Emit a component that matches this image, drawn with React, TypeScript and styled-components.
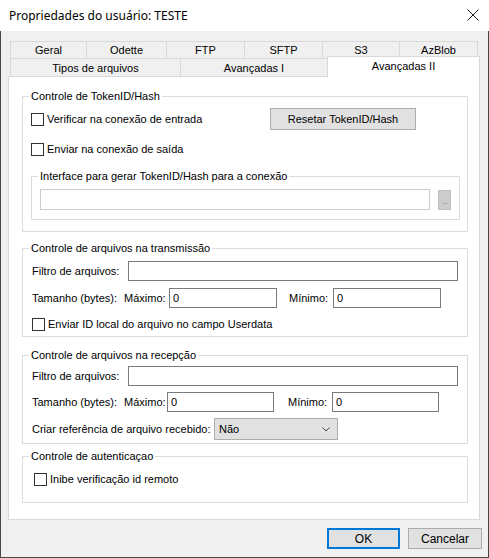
import React from "react";
import styled, { createGlobalStyle } from "styled-components";

const GlobalStyle = createGlobalStyle`
  html, body {
    margin: 0;
    padding: 0;
    background: #ffffff;
  }
  body {
    font-family: "Liberation Sans", Arial, sans-serif;
    font-size: 11px;
    color: #000000;
  }
  * {
    box-sizing: border-box;
  }
`;

const firstRowTabs = [
  { label: "Geral", width: 76 },
  { label: "Odette", width: 80 },
  { label: "FTP", width: 78 },
  { label: "SFTP", width: 78 },
  { label: "S3", width: 77 },
  { label: "AzBlob", width: 79 },
];

const secondRowTabs = [
  { label: "Tipos de arquivos", width: 170 },
  { label: "Avançadas I", width: 147 },
  { label: "Avançadas II", width: 153, active: true },
];

type CheckProps = {
  label: string;
  width?: number;
};

const CheckField = (props: CheckProps) => {
  const { label, width } = props;
  return (
    <CheckWrap $width={width}>
      <CheckBox />
      <span>{label}</span>
    </CheckWrap>
  );
};

type RangeProps = {
  labelWidth: number;
  maxLabelWidth: number;
  minLabelWidth: number;
  fieldWidth: number;
  gap: number;
};

const SizeRange = (props: RangeProps) => {
  const { labelWidth, maxLabelWidth, minLabelWidth, fieldWidth, gap } = props;
  return (
    <Row>
      <Label $width={labelWidth}>Tamanho (bytes):</Label>
      <Label $width={maxLabelWidth}>Máximo:</Label>
      <TextBox $width={fieldWidth} defaultValue="0" />
      <Label $width={minLabelWidth} $left={gap}>
        Mínimo:
      </Label>
      <TextBox $width={fieldWidth} defaultValue="0" />
    </Row>
  );
};

export default function App() {
  return (
    <>
      <GlobalStyle />
      <Window>
        <TitleBar>
          <span>Propriedades do usuário: TESTE</span>
          <svg width="12" height="12" viewBox="0 0 12 12">
            <path d="M0.5 0.5 L11.5 11.5 M11.5 0.5 L0.5 11.5" stroke="#1a1a1a" strokeWidth="1" />
          </svg>
        </TitleBar>

        <Body>
          <TabStrip>
            <TabRow>
              {firstRowTabs.map((t, i) => (
                <Tab key={t.label} $width={t.width} $last={i === firstRowTabs.length - 1}>
                  {t.label}
                </Tab>
              ))}
            </TabRow>
            <TabRow $second>
              {secondRowTabs.map((t) =>
                t.active ? (
                  <ActiveTab key={t.label} $width={t.width}>
                    {t.label}
                  </ActiveTab>
                ) : (
                  <Tab key={t.label} $width={t.width}>
                    {t.label}
                  </Tab>
                )
              )}
            </TabRow>
          </TabStrip>

          <Panel>
            <GroupBox>
              <Legend>Controle de TokenID/Hash</Legend>
              <GroupContent $pad="5px 8px 11px 8px">
                <Row $height={22}>
                  <CheckField label="Verificar na conexão de entrada" width={239} />
                  <PushButton $width={146}>Resetar TokenID/Hash</PushButton>
                </Row>
                <Row $height={16} $top={11}>
                  <CheckField label="Enviar na conexão de saída" />
                </Row>
                <InnerGroup>
                  <Legend>Interface para gerar TokenID/Hash para a conexão</Legend>
                  <GroupContent $pad="6px 8px 9px 8px">
                    <Row>
                      <TextBox $width={390} $height={21} $disabled />
                      <EllipsisButton>...</EllipsisButton>
                    </Row>
                  </GroupContent>
                </InnerGroup>
              </GroupContent>
            </GroupBox>

            <GroupBox $gap={10}>
              <Legend>Controle de arquivos na transmissão</Legend>
              <GroupContent $pad="6px 9px 4px 9px">
                <Row>
                  <Label $width={96}>Filtro de arquivos:</Label>
                  <TextBox $width={330} />
                </Row>
                <Row $top={7}>
                  <SizeRange labelWidth={92} maxLabelWidth={45} minLabelWidth={44} fieldWidth={108} gap={12} />
                </Row>
                <Row $height={16} $top={8}>
                  <CheckField label="Enviar ID local do arquivo no campo Userdata" />
                </Row>
              </GroupContent>
            </GroupBox>

            <GroupBox $gap={12}>
              <Legend>Controle de arquivos na recepção</Legend>
              <GroupContent $pad="4px 9px 3px 9px">
                <Row>
                  <Label $width={96}>Filtro de arquivos:</Label>
                  <TextBox $width={330} />
                </Row>
                <Row $top={6}>
                  <SizeRange labelWidth={92} maxLabelWidth={43} minLabelWidth={44} fieldWidth={107} gap={14} />
                </Row>
                <Row $top={6}>
                  <Label $width={182}>Criar referência de arquivo recebido:</Label>
                  <ComboBox>
                    <span>Não</span>
                    <svg width="8" height="5" viewBox="0 0 8 5">
                      <path d="M0.5 0.5 L4 4 L7.5 0.5" fill="none" stroke="#444" strokeWidth="1" />
                    </svg>
                  </ComboBox>
                </Row>
              </GroupContent>
            </GroupBox>

            <GroupBox $gap={6}>
              <Legend>Controle de autenticaçao</Legend>
              <GroupContent $pad="8px 11px 15px 11px">
                <Row $height={16}>
                  <CheckField label="Inibe verificação id remoto" />
                </Row>
              </GroupContent>
            </GroupBox>
          </Panel>

          <Footer>
            <DialogButton $width={73} $default>
              OK
            </DialogButton>
            <DialogButton $width={74}>Cancelar</DialogButton>
          </Footer>
        </Body>
      </Window>
    </>
  );
}

const Window = styled.div`
  width: 489px;
  height: 558px;
  display: flex;
  flex-direction: column;
  background: #f0f0f0;
`;

const TitleBar = styled.div`
  height: 31px;
  flex: none;
  background: #ffffff;
  display: flex;
  align-items: center;
  justify-content: space-between;
  padding: 0 10px 1px 9px;
  font-family: "Segoe UI", "Noto Sans", sans-serif;
  font-size: 12px;
  color: #000000;
`;

const Body = styled.div`
  flex: 1;
  display: flex;
  flex-direction: column;
  border: 1px solid #474747;
  border-top: none;
  padding: 10px 6px 0 7px;
`;

const TabStrip = styled.div`
  display: flex;
  flex-direction: column;
  padding-left: 2px;
`;

const TabRow = styled.div<{ $second?: boolean }>`
  display: flex;
  align-items: flex-start;
  height: ${(p) => (p.$second ? 18 : 17)}px;
`;

const Tab = styled.div<{ $width: number; $last?: boolean }>`
  width: ${(p) => p.$width}px;
  height: 100%;
  display: flex;
  align-items: center;
  justify-content: center;
  border: 1px solid #d9d9d9;
  border-bottom: none;
  border-right: ${(p) => (p.$last ? "1px solid #d9d9d9" : "none")};
  background: #f0f0f0;
  white-space: nowrap;
`;

const ActiveTab = styled.div<{ $width: number }>`
  position: relative;
  z-index: 1;
  width: ${(p) => p.$width}px;
  height: 21px;
  margin-top: -2px;
  display: flex;
  align-items: center;
  justify-content: center;
  padding-bottom: 3px;
  border: 1px solid #d9d9d9;
  border-bottom: none;
  background: #ffffff;
  white-space: nowrap;
`;

const Panel = styled.div`
  width: 472px;
  height: 444px;
  background: #ffffff;
  border: 1px solid #d9d9d9;
  padding: 13px 0 0 13px;
  display: flex;
  flex-direction: column;
`;

const GroupBox = styled.fieldset<{ $gap?: number }>`
  width: 446px;
  min-width: 0;
  margin: ${(p) => p.$gap || 0}px 0 0 0;
  padding: 0;
  border: 1px solid #dcdcdc;
`;

const InnerGroup = styled.fieldset`
  width: 429px;
  min-width: 0;
  margin: 13px 0 0 0;
  padding: 0;
  border: 1px solid #dcdcdc;
`;

const GroupContent = styled.div<{ $pad: string }>`
  display: flex;
  flex-direction: column;
  padding: ${(p) => p.$pad};
`;

const Legend = styled.legend`
  margin-left: 6px;
  padding: 0 2px;
  line-height: 13px;
  white-space: nowrap;
`;

const Row = styled.div<{ $height?: number; $top?: number }>`
  display: flex;
  align-items: center;
  height: ${(p) => (p.$height ? `${p.$height}px` : "auto")};
  margin-top: ${(p) => p.$top || 0}px;
`;

const Label = styled.span<{ $width: number; $left?: number }>`
  flex: none;
  width: ${(p) => p.$width}px;
  margin-left: ${(p) => p.$left || 0}px;
  white-space: nowrap;
`;

const CheckWrap = styled.label<{ $width?: number }>`
  display: flex;
  align-items: center;
  gap: 3px;
  flex: none;
  width: ${(p) => (p.$width ? `${p.$width}px` : "auto")};
  white-space: nowrap;
`;

const CheckBox = styled.span`
  width: 13px;
  height: 13px;
  flex: none;
  border: 1px solid #333333;
  background: #ffffff;
`;

const TextBox = styled.input<{ $width: number; $height?: number; $disabled?: boolean }>`
  flex: none;
  width: ${(p) => p.$width}px;
  height: ${(p) => p.$height || 20}px;
  margin: 0;
  padding: 0 3px;
  border: 1px solid ${(p) => (p.$disabled ? "#cccccc" : "#7a7a7a")};
  background: #ffffff;
  font-family: "Liberation Sans", Arial, sans-serif;
  font-size: 11px;
  color: #000000;
  outline: none;
`;

const PushButton = styled.div<{ $width: number }>`
  width: ${(p) => p.$width}px;
  height: 22px;
  display: flex;
  align-items: center;
  justify-content: center;
  background: #e1e1e1;
  border: 1px solid #adadad;
`;

const EllipsisButton = styled.div`
  width: 14px;
  height: 20px;
  margin-left: 8px;
  display: flex;
  align-items: flex-end;
  justify-content: center;
  padding-bottom: 3px;
  background: #cccccc;
  border: 1px solid #bfbfbf;
  color: #8d8d8d;
  font-size: 9px;
  line-height: 9px;
  letter-spacing: -1px;
`;

const ComboBox = styled.div`
  width: 124px;
  height: 22px;
  display: flex;
  align-items: center;
  justify-content: space-between;
  padding: 0 7px 0 4px;
  background: #e1e1e1;
  border: 1px solid #adadad;
`;

const Footer = styled.div`
  display: flex;
  justify-content: flex-end;
  gap: 8px;
  padding-top: 8px;
`;

const DialogButton = styled.div<{ $width: number; $default?: boolean }>`
  width: ${(p) => p.$width}px;
  height: 21px;
  display: flex;
  align-items: center;
  justify-content: center;
  background: #e1e1e1;
  border: ${(p) => (p.$default ? "2px solid #0078d7" : "1px solid #adadad")};
  font-size: 12px;
`;
